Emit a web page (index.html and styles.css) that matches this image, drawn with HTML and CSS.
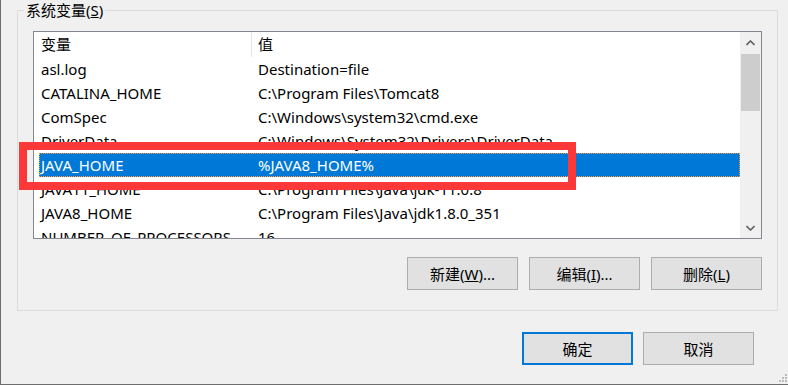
FILE: index.html
```html
<!DOCTYPE html>
<html lang="zh-CN">
<head>
  <meta charset="UTF-8">
  <title>环境变量</title>
  <link rel="stylesheet" href="styles.css">
</head>
<body>
  <div class="window">
    <fieldset class="group">
      <legend>系统变量(<u>S</u>)</legend>
      <div class="group-body">
        <div class="listbox">
          <div class="list">
            <div class="list-head">
              <span class="cell-name">变量</span>
              <span class="cell-value">值</span>
            </div>
            <div class="row"><span class="cell-name">asl.log</span><span class="cell-value">Destination=file</span></div>
            <div class="row"><span class="cell-name">CATALINA_HOME</span><span class="cell-value">C:\Program Files\Tomcat8</span></div>
            <div class="row"><span class="cell-name">ComSpec</span><span class="cell-value">C:\Windows\system32\cmd.exe</span></div>
            <div class="row"><span class="cell-name">DriverData</span><span class="cell-value">C:\Windows\System32\Drivers\DriverData</span></div>
            <div class="row selected"><span class="cell-name">JAVA_HOME</span><span class="cell-value">%JAVA8_HOME%</span></div>
            <div class="row"><span class="cell-name">JAVA11_HOME</span><span class="cell-value">C:\Program Files\Java\jdk-11.0.8</span></div>
            <div class="row"><span class="cell-name">JAVA8_HOME</span><span class="cell-value">C:\Program Files\Java\jdk1.8.0_351</span></div>
            <div class="row"><span class="cell-name">NUMBER_OF_PROCESSORS</span><span class="cell-value">16</span></div>
          </div>
          <div class="scrollbar">
            <div class="sb-btn">
              <svg width="9" height="6" viewBox="0 0 9 6"><path d="M0.5 5 L4.5 1 L8.5 5" fill="none" stroke="#606060" stroke-width="1.6"/></svg>
            </div>
            <div class="sb-track"><div class="sb-thumb"></div></div>
            <div class="sb-btn">
              <svg width="9" height="6" viewBox="0 0 9 6"><path d="M0.5 1 L4.5 5 L8.5 1" fill="none" stroke="#606060" stroke-width="1.6"/></svg>
            </div>
          </div>
        </div>
        <div class="actions">
          <button class="btn">新建(<u>W</u>)...</button>
          <button class="btn">编辑(<u>I</u>)...</button>
          <button class="btn">删除(<u>L</u>)</button>
        </div>
      </div>
    </fieldset>

    <div class="dialog-actions">
      <button class="btn btn-default">确定</button>
      <button class="btn">取消</button>
    </div>

    <!-- 标注框 -->
    <div class="mark-box"></div>

    <svg class="grip" width="9" height="9" viewBox="0 0 9 9">
      <rect x="6" y="0" width="2" height="2" fill="#bcbcbc"/>
      <rect x="3" y="3" width="2" height="2" fill="#bcbcbc"/>
      <rect x="6" y="3" width="2" height="2" fill="#bcbcbc"/>
      <rect x="0" y="6" width="2" height="2" fill="#bcbcbc"/>
      <rect x="3" y="6" width="2" height="2" fill="#bcbcbc"/>
      <rect x="6" y="6" width="2" height="2" fill="#bcbcbc"/>
    </svg>
  </div>
</body>
</html>
```

FILE: styles.css
```css
html, body {
  margin: 0;
  padding: 0;
}
body {
  font-family: "Noto Sans", "Noto Sans CJK SC", sans-serif;
  font-size: 15px;
  color: #000;
  background: #f0f0f0;
}
.window {
  position: relative;
  height: 385px;
  box-sizing: border-box;
  border-left: 1px solid #6d6d6d;
  border-bottom: 1px solid #6d6d6d;
  padding: 0 10px 0 16px;
  overflow: hidden;
}
.group {
  margin: 0;
  padding: 0;
  border: 1px solid #dcdcdc;
  min-width: 0;
}
.group legend {
  margin-left: 6px;
  padding: 0 2px;
  height: 20px;
  line-height: 20px;
}
.group-body {
  padding: 11px 15px 20px 15px;
}
.listbox {
  display: flex;
  height: 208px;
  box-sizing: border-box;
  border: 1px solid #828790;
  background: #fff;
}
.list {
  flex: 1;
  overflow: hidden;
}
.list-head, .row {
  display: flex;
  margin-left: 5px;
  white-space: nowrap;
}
.list-head {
  height: 25px;
  line-height: 24px;
}
.list-head .cell-name {
  width: 210px;
  padding-left: 2px;
  border-right: 1px solid #e5e5e5;
  margin-right: 6px;
}
.row {
  height: 24px;
  line-height: 24px;
}
.row .cell-name {
  width: 217px;
  padding-left: 2px;
  flex-shrink: 0;
}
.row.selected {
  background: #0078d7;
  color: #fff;
  outline: 1px dotted #ff9a3c;
  outline-offset: -1px;
}
.scrollbar {
  width: 21px;
  display: flex;
  flex-direction: column;
  background: #f0f0f0;
}
.sb-btn {
  height: 21px;
  display: flex;
  align-items: center;
  justify-content: center;
}
.sb-track {
  flex: 1;
  padding: 1px 1px 0;
}
.sb-thumb {
  height: 57px;
  background: #cdcdcd;
}
.actions {
  display: flex;
  justify-content: flex-end;
  gap: 11px;
  margin-top: 18px;
}
.btn {
  width: 111px;
  height: 33px;
  padding: 0;
  box-sizing: border-box;
  border: 1px solid #adadad;
  background: #e1e1e1;
  font-family: inherit;
  font-size: 15px;
  color: #000;
}
.btn-default {
  border: 2px solid #0078d7;
}
.dialog-actions {
  display: flex;
  justify-content: flex-end;
  gap: 10px;
  margin: 21px 24px 0 0;
}
.mark-box {
  position: absolute;
  left: 18px;
  top: 142px;
  width: 557px;
  height: 48px;
  box-sizing: border-box;
  border: 8px solid #fc3838;
}
.grip {
  position: absolute;
  right: 0;
  bottom: 1px;
}
```
